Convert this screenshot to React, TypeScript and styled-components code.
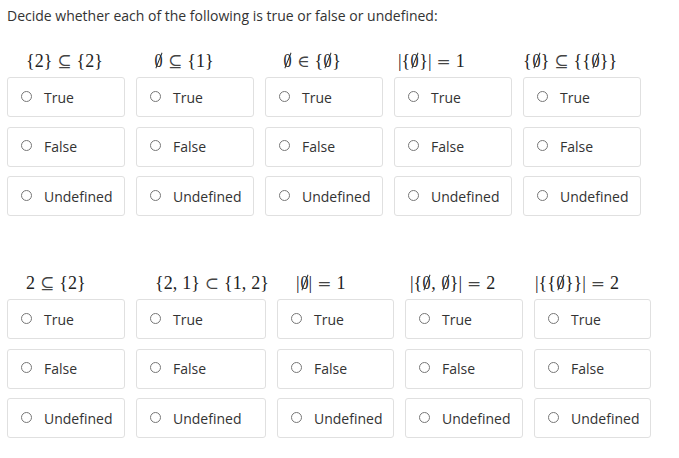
import styled, { createGlobalStyle } from 'styled-components';

const GlobalStyle = createGlobalStyle`
  body {
    margin: 0;
    background: #fff;
    font-family: 'Open Sans', 'Liberation Sans', sans-serif;
    color: #333;
  }
`;

type Question = { label: string; indent: number; width: number };

const sections: Question[][] = [
  [
    { label: '{2} ⊆ {2}', indent: 19, width: 118 },
    { label: '∅ ⊆ {1}', indent: 18, width: 118 },
    { label: '∅ ∈ {∅}', indent: 18, width: 118 },
    { label: '|{∅}| = 1', indent: 4, width: 118 },
    { label: '{∅} ⊆ {{∅}}', indent: 0, width: 118 },
  ],
  [
    { label: '2 ⊆ {2}', indent: 19, width: 118 },
    { label: '{2, 1} ⊂ {1, 2}', indent: 19, width: 130 },
    { label: '|∅| = 1', indent: 19, width: 117 },
    { label: '|{∅, ∅}| = 2', indent: 5, width: 118 },
    { label: '|{{∅}}| = 2', indent: 1, width: 117 },
  ],
];

const choices = ['True', 'False', 'Undefined'];

// split a label into plain text, relation symbols and the empty set
const renderMath = (label: string) =>
  Array.from(label).map((ch, i) => {
    if (ch === '∅') return <EmptySet key={i}>0</EmptySet>;
    if (ch === '⊆' || ch === '⊂' || ch === '∈' || ch === '=') return <Rel key={i}>{ch}</Rel>;
    if (ch === ' ') return <Space key={i} />;
    return <span key={i}>{ch}</span>;
  });

const App = () => {
  return (
    <Page>
      <GlobalStyle />
      <Prompt>Decide whether each of the following is true or false or undefined:</Prompt>
      {sections.map((questions, s) => (
        <Section key={s}>
          {questions.map((q, i) => (
            <Column key={i} $width={q.width}>
              <MathLabel $indent={q.indent}>{renderMath(q.label)}</MathLabel>
              {choices.map((c) => (
                <Choice key={c}>
                  <Radio />
                  <ChoiceText>{c}</ChoiceText>
                </Choice>
              ))}
            </Column>
          ))}
        </Section>
      ))}
    </Page>
  );
};

export default App;

const Page = styled.div`
  padding: 6px 7px 20px;
`;

const Prompt = styled.div`
  font-size: 14px;
  line-height: 20px;
  color: #333;
`;

const Section = styled.div`
  display: flex;
  gap: 11px;
  margin-top: 23px;

  & + & {
    margin-top: 55px;
  }
`;

const Column = styled.div<{ $width: number }>`
  display: flex;
  flex-direction: column;
  gap: 9.5px;
  width: ${({ $width }) => $width}px;
`;

const MathLabel = styled.div<{ $indent: number }>`
  font-family: 'Liberation Serif', 'DejaVu Serif', serif;
  font-size: 18px;
  line-height: 24px;
  height: 24px;
  color: #222;
  white-space: nowrap;
  padding-left: ${({ $indent }) => $indent}px;
  margin-bottom: -5.5px;
`;

const Space = styled.span`
  display: inline-block;
  width: 5px;
`;

const Rel = styled.span`
  font-family: 'DejaVu Serif', serif;
  font-size: 17px;
  color: #444;
`;

const EmptySet = styled.span`
  position: relative;
  display: inline-block;
  transform: scaleX(0.9);

  &::after {
    content: '';
    position: absolute;
    left: 50%;
    top: 3px;
    width: 1px;
    height: 17px;
    background: #222;
    transform: translateX(-50%) rotate(24deg);
  }
`;

const Choice = styled.label`
  display: flex;
  align-items: center;
  box-sizing: border-box;
  height: 40px;
  padding-left: 13px;
  border: 1px solid #e0e0e0;
  border-radius: 3px;
  background: #fff;
`;

const Radio = styled.span`
  box-sizing: border-box;
  width: 11px;
  height: 11px;
  border: 1px solid #777;
  border-radius: 50%;
  margin-top: -2px;
`;

const ChoiceText = styled.span`
  margin-left: 12px;
  font-size: 14px;
  color: #333;
`;
